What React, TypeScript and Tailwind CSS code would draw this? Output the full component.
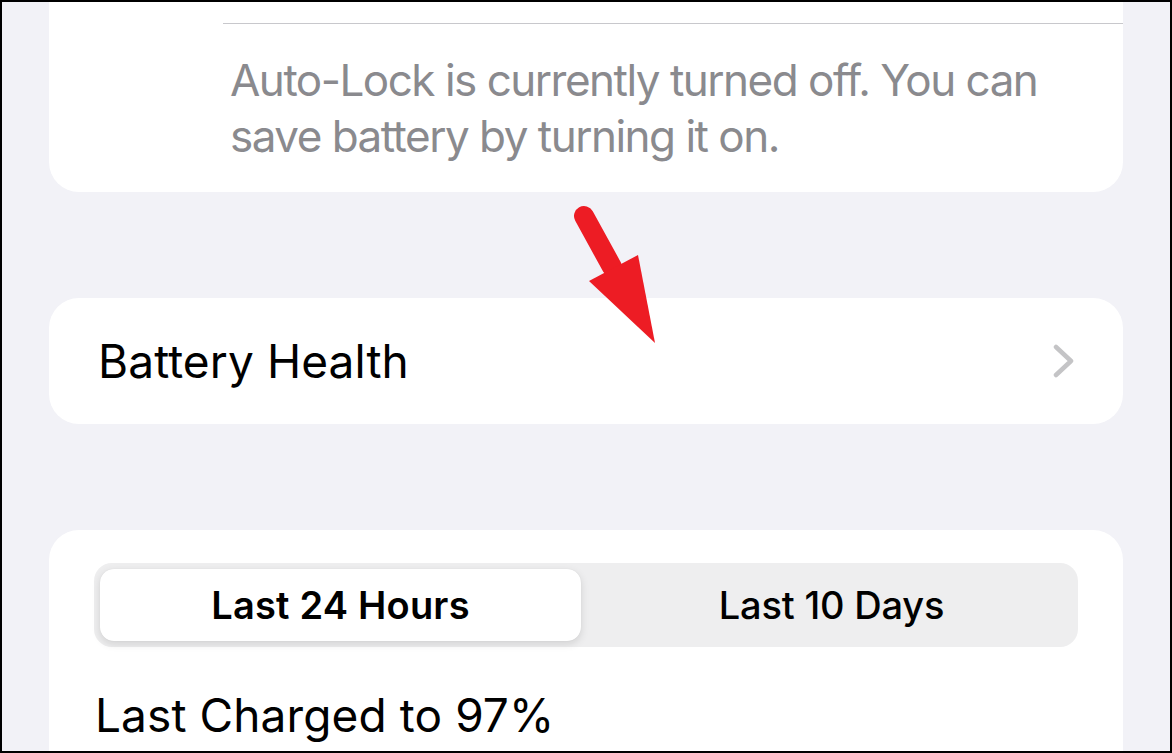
const font = { fontFamily: "Inter, 'Noto Sans', sans-serif" };

function Arrow() {
  return (
    <svg
      className="absolute left-[568px] top-[198px] pointer-events-none"
      width="100"
      height="150"
      viewBox="570 200 100 150"
    >
      <line x1="584" y1="216" x2="612" y2="267" stroke="#ed1c24" strokeWidth="20" strokeLinecap="round" />
      <polygon points="589,281 638,255 655,343" fill="#ed1c24" />
    </svg>
  );
}

function Chevron() {
  return (
    <svg width="22" height="36" viewBox="0 0 22 36" fill="none">
      <polyline
        points="4,4 19,18 4,32"
        stroke="#c4c4c6"
        strokeWidth="4.5"
        strokeLinecap="round"
        strokeLinejoin="round"
      />
    </svg>
  );
}

export default function App() {
  return (
    <div
      className="relative w-[1172px] h-[753px] overflow-hidden border-2 border-black bg-[#f2f2f7] px-[47px]"
      style={font}
    >
      {/* auto-lock note, top cut off */}
      <div className="bg-white rounded-b-[30px] pt-[21px] pb-[28px]">
        <div className="ml-[174px] h-px bg-[#c8c8cc]" />
        <p className="ml-[181px] mt-[28px] pr-[40px] text-[44px] leading-[56px] text-[#8a8a8e] tracking-[-1.5px]">
          Auto-Lock is currently turned off. You can save battery by turning it on.
        </p>
      </div>

      <div className="mt-[106px] h-[126px] bg-white rounded-[30px] flex items-center justify-between pl-[49px] pr-[49px]">
        <span className="text-[46px] text-black tracking-[0.1px]">Battery Health</span>
        <Chevron />
      </div>

      <div className="mt-[106px] h-[300px] bg-white rounded-t-[30px] px-[45px] pt-[33px]">
        <div className="flex h-[84px] rounded-[18px] bg-[#eeeeef] p-[6px]">
          <div className="flex-1 flex pr-[10px]">
            <div className="flex-1 flex items-center justify-center rounded-[14px] bg-white shadow-[0_3px_8px_rgba(0,0,0,0.12),0_0_1px_rgba(0,0,0,0.1)]">
              <span className="text-[38px] font-semibold text-black tracking-[0.2px]">Last 24 Hours</span>
            </div>
          </div>
          <div className="flex-1 flex items-center justify-center">
            <span className="text-[38px] font-medium text-black tracking-[-0.2px]">Last 10 Days</span>
          </div>
        </div>
        <p className="mt-[40px] ml-[1px] text-[46px] leading-[56px] text-black tracking-[0.1px]">Last Charged to 97%</p>
      </div>

      <Arrow />
    </div>
  );
}
